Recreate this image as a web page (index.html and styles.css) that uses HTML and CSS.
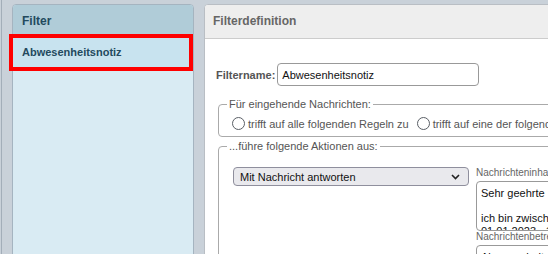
FILE: index.html
```html
<!DOCTYPE html>
<html lang="de">
<head>
<meta charset="UTF-8">
<meta name="viewport" content="width=device-width, initial-scale=1.0">
<title>Filter</title>
<link rel="stylesheet" href="styles.css">
</head>
<body>
  <div class="page">
    <div class="edge"></div>

    <div class="filters">
      <div class="filters-head">Filter</div>
      <div class="filters-item selected">Abwesenheitsnotiz</div>
    </div>

    <div class="editor">
      <div class="editor-head">Filterdefinition</div>
      <div class="editor-body">
        <div class="name-row">
          <label for="filtername">Filtername:</label>
          <input type="text" id="filtername" class="field name-field" value="Abwesenheitsnotiz">
        </div>

        <fieldset class="group">
          <legend>Für eingehende Nachrichten:</legend>
          <div class="choices">
            <label class="choice"><input type="radio" name="match"> trifft auf alle folgenden Regeln zu</label>
            <label class="choice"><input type="radio" name="match"> trifft auf eine der folgenden Regeln zu</label>
          </div>
        </fieldset>

        <fieldset class="group actions">
          <legend>...führe folgende Aktionen aus:</legend>
          <div class="action-row">
            <div class="select-wrap">
              <select class="action-select">
                <option>Mit Nachricht antworten</option>
              </select>
              <svg class="chevron" width="9" height="6" viewBox="0 0 9 6"><path d="M1 1l3.5 3.5L8 1" fill="none" stroke="#222" stroke-width="1.6"/></svg>
            </div>
            <div class="action-fields">
              <label class="small-label">Nachrichteninhalt</label>
              <div class="msg-body">
                <p>Sehr geehrte <span class="var">Damen und Herren</span>,</p>
                <p>&nbsp;</p>
                <p>ich bin zwischen dem</p>
                <p>01.01.2023 - 15.01.2023 nicht im Büro.</p>
              </div>
              <label class="small-label">Nachrichtenbetreff</label>
              <input type="text" class="field subject-field" value="Abwesenheitsnotiz">
            </div>
          </div>
        </fieldset>
      </div>
    </div>
  </div>
</body>
</html>
```

FILE: styles.css
```css
body {
  margin: 0;
  background: #c9d1d9;
  font-family: "Liberation Sans", Arial, sans-serif;
  overflow: hidden;
}

.page {
  display: flex;
  align-items: flex-start;
  height: 254px;
  padding-top: 4px;
  box-sizing: border-box;
}

.edge {
  width: 1px;
  align-self: stretch;
  margin-top: -4px;
  border-right: 1px solid #a3aeb9;
  flex-shrink: 0;
}

/* left list */
.filters {
  flex-shrink: 0;
  margin-left: 10px;
  width: 180px;
  height: 300px;
  border: 1px solid #a5b4c0;
  border-radius: 4px 4px 0 0;
  background: #d9ebf3;
}

.filters-head {
  height: 33px;
  line-height: 33px;
  padding-left: 9px;
  background: #b0ccd8;
  border-radius: 3px 3px 0 0;
  color: #234a5e;
  font-size: 12px;
  font-weight: bold;
}

.filters-item {
  height: 29px;
  line-height: 29px;
  margin-right: 4px;
  padding-left: 9px;
  color: #234a5e;
  font-size: 11px;
  font-weight: bold;
}

.filters-item.selected {
  background: #c8e3ef;
  outline: 4px solid #ff0000;
}

/* right editor */
.editor {
  flex-shrink: 0;
  margin-left: 10px;
  width: 720px;
  height: 300px;
  border: 1px solid #b9bec4;
  border-radius: 4px 4px 0 0;
  background: #fff;
}

.editor-head {
  height: 33px;
  line-height: 33px;
  padding-left: 8px;
  background: #eeeeee;
  border-bottom: 1px solid #cccccc;
  border-radius: 3px 3px 0 0;
  color: #666;
  font-size: 12px;
  font-weight: bold;
}

.editor-body {
  padding: 24px 0 0 11px;
}

.name-row {
  display: flex;
  align-items: center;
  gap: 2px;
}

.name-row label {
  color: #555;
  font-size: 11px;
  font-weight: bold;
}

.field {
  box-sizing: border-box;
  height: 23px;
  padding: 0 4px;
  border: 1px solid #999;
  border-radius: 4px;
  font-family: inherit;
  font-size: 11px;
  color: #111;
}

.name-field {
  width: 202px;
}

.group {
  margin: 12px 2px 0;
  padding: 7px 8px 6px;
  border: 1px solid #aaa;
  border-radius: 4px;
  color: #555;
  font-size: 11px;
}

.group legend {
  padding: 0 2px;
}

.choices {
  display: flex;
  align-items: center;
}

.choice {
  display: flex;
  align-items: center;
  flex-shrink: 0;
  margin-right: 3px;
  white-space: nowrap;
}

.choice input {
  appearance: none;
  box-sizing: border-box;
  width: 13px;
  height: 13px;
  margin: 0 3px 0 5px;
  border: 1.6px solid #5a5f66;
  border-radius: 50%;
  background: #fff;
}

.actions {
  margin-top: 3px;
  padding-top: 14px;
  min-height: 200px;
}

.action-row {
  display: flex;
  align-items: flex-start;
  gap: 7px;
}

.select-wrap {
  position: relative;
  flex-shrink: 0;
  margin: 1px 0 0 6px;
}

.action-select {
  appearance: none;
  box-sizing: border-box;
  width: 236px;
  height: 19px;
  padding: 0 6px;
  border: 1px solid #8f8f9d;
  border-radius: 4px;
  background: #e9e9ed;
  color: #111;
  font-family: inherit;
  font-size: 11px;
}

.chevron {
  position: absolute;
  right: 9px;
  top: 7px;
}

.action-fields {
  display: flex;
  flex-direction: column;
  flex-shrink: 0;
  width: 200px;
  margin-top: 1px;
}

.small-label {
  height: 12px;
  line-height: 12px;
  color: #666;
  font-size: 10px;
  white-space: nowrap;
}

.msg-body {
  box-sizing: border-box;
  height: 50px;
  margin-top: 2px;
  padding: 5px 4px 3px;
  overflow: hidden;
  border: 1px solid #999;
  border-radius: 4px;
  color: #111;
  font-size: 11px;
  line-height: 12.5px;
}

.msg-body p {
  margin: 0;
  white-space: nowrap;
}

.var {
  color: #f0b400;
}

.subject-field {
  margin-top: 2px;
  width: 200px;
}
```
